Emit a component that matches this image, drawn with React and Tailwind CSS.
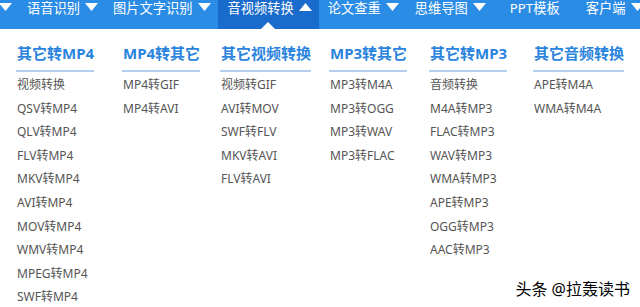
import React from "react";

const navItems = [
  { label: "", arrow: "down", pad: "pr-[7px]" },
  { label: "语音识别", arrow: "down", pad: "pl-[8px] pr-[7px]" },
  { label: "图片文字识别", arrow: "down", pad: "pl-[8px] pr-[7px]" },
  { label: "音视频转换", arrow: "up", active: true, pad: "pl-[10px] pr-[7px]" },
  { label: "论文查重", arrow: "down", pad: "pl-[9px] pr-[7px]" },
  { label: "思维导图", arrow: "down", pad: "pl-[9px] pr-[7px]" },
  { label: "PPT模板", pad: "pl-[17px] pr-[8px]" },
  { label: "客户端", arrow: "down", pad: "pl-[18px]" },
];

const columns = [
  {
    title: "其它转MP4",
    width: "w-[106px]",
    items: ["视频转换", "QSV转MP4", "QLV转MP4", "FLV转MP4", "MKV转MP4", "AVI转MP4", "MOV转MP4", "WMV转MP4", "MPEG转MP4", "SWF转MP4"],
  },
  { title: "MP4转其它", width: "w-[98px]", items: ["MP4转GIF", "MP4转AVI"] },
  {
    title: "其它视频转换",
    width: "w-[109px]",
    items: ["视频转GIF", "AVI转MOV", "SWF转FLV", "MKV转AVI", "FLV转AVI"],
  },
  { title: "MP3转其它", width: "w-[100px]", items: ["MP3转M4A", "MP3转OGG", "MP3转WAV", "MP3转FLAC"] },
  {
    title: "其它转MP3",
    width: "w-[104px]",
    items: ["音频转换", "M4A转MP3", "FLAC转MP3", "WAV转MP3", "WMA转MP3", "APE转MP3", "OGG转MP3", "AAC转MP3"],
  },
  { title: "其它音频转换", width: "w-[106px]", items: ["APE转M4A", "WMA转M4A"] },
];

const Caret = ({ up }) => (
  <svg width="13" height="8" viewBox="0 0 13 8" className="shrink-0">
    {up ? <path d="M0 8 L6.5 0 L13 8 Z" fill="#fff" /> : <path d="M0 0 L6.5 8 L13 0 Z" fill="#fff" />}
  </svg>
);

const App = () => {
  return (
    <div
      className="relative w-[640px] h-[307px] overflow-hidden bg-white"
      style={{ fontFamily: '"Noto Sans", "Noto Sans CJK SC", sans-serif' }}
    >
      {/* NAV */}
      <div className="h-[29px] bg-[#2b8ce6] flex items-start -ml-px">
        {navItems.map((n, i) => (
          <div
            key={i}
            className={`relative h-full shrink-0 flex items-start gap-[5px] ${n.pad} ${n.active ? "bg-[#1a6ccc]" : ""}`}
          >
            {n.label && (
              <span className="text-white text-[13.25px] leading-[14px] mt-px whitespace-nowrap">{n.label}</span>
            )}
            {n.arrow && (
              <span className="mt-[3px]">
                <Caret up={n.arrow === "up"} />
              </span>
            )}
            {n.active && (
              <span className="absolute left-1/2 -translate-x-1/2 bottom-0 w-0 h-0 border-l-[7px] border-r-[7px] border-b-[7px] border-l-transparent border-r-transparent border-b-white" />
            )}
          </div>
        ))}
      </div>

      {/* MENU */}
      <div className="flex pl-[16px] pt-[12px]">
        {columns.map((c) => (
          <div key={c.title} className={`${c.width} shrink-0`}>
            <div className="inline-block border-b-2 border-[#b3cff0] pb-[8px]">
              <h3 className="text-[#2a84de] text-[15px] font-bold leading-[18px] pl-px whitespace-nowrap">{c.title}</h3>
            </div>
            <ul className="pt-[1px] pl-px">
              {c.items.map((it) => (
                <li key={it} className="text-[#555] text-[12px] leading-[23.6px] whitespace-nowrap">
                  {it}
                </li>
              ))}
            </ul>
          </div>
        ))}
      </div>

      <div
        className="absolute right-[10px] bottom-[10px] text-[16px] text-black leading-none"
        style={{ textShadow: "0 0 2px #fff, 0 0 2px #fff" }}
      >
        头条 @拉轰读书
      </div>
    </div>
  );
};

export default App;
